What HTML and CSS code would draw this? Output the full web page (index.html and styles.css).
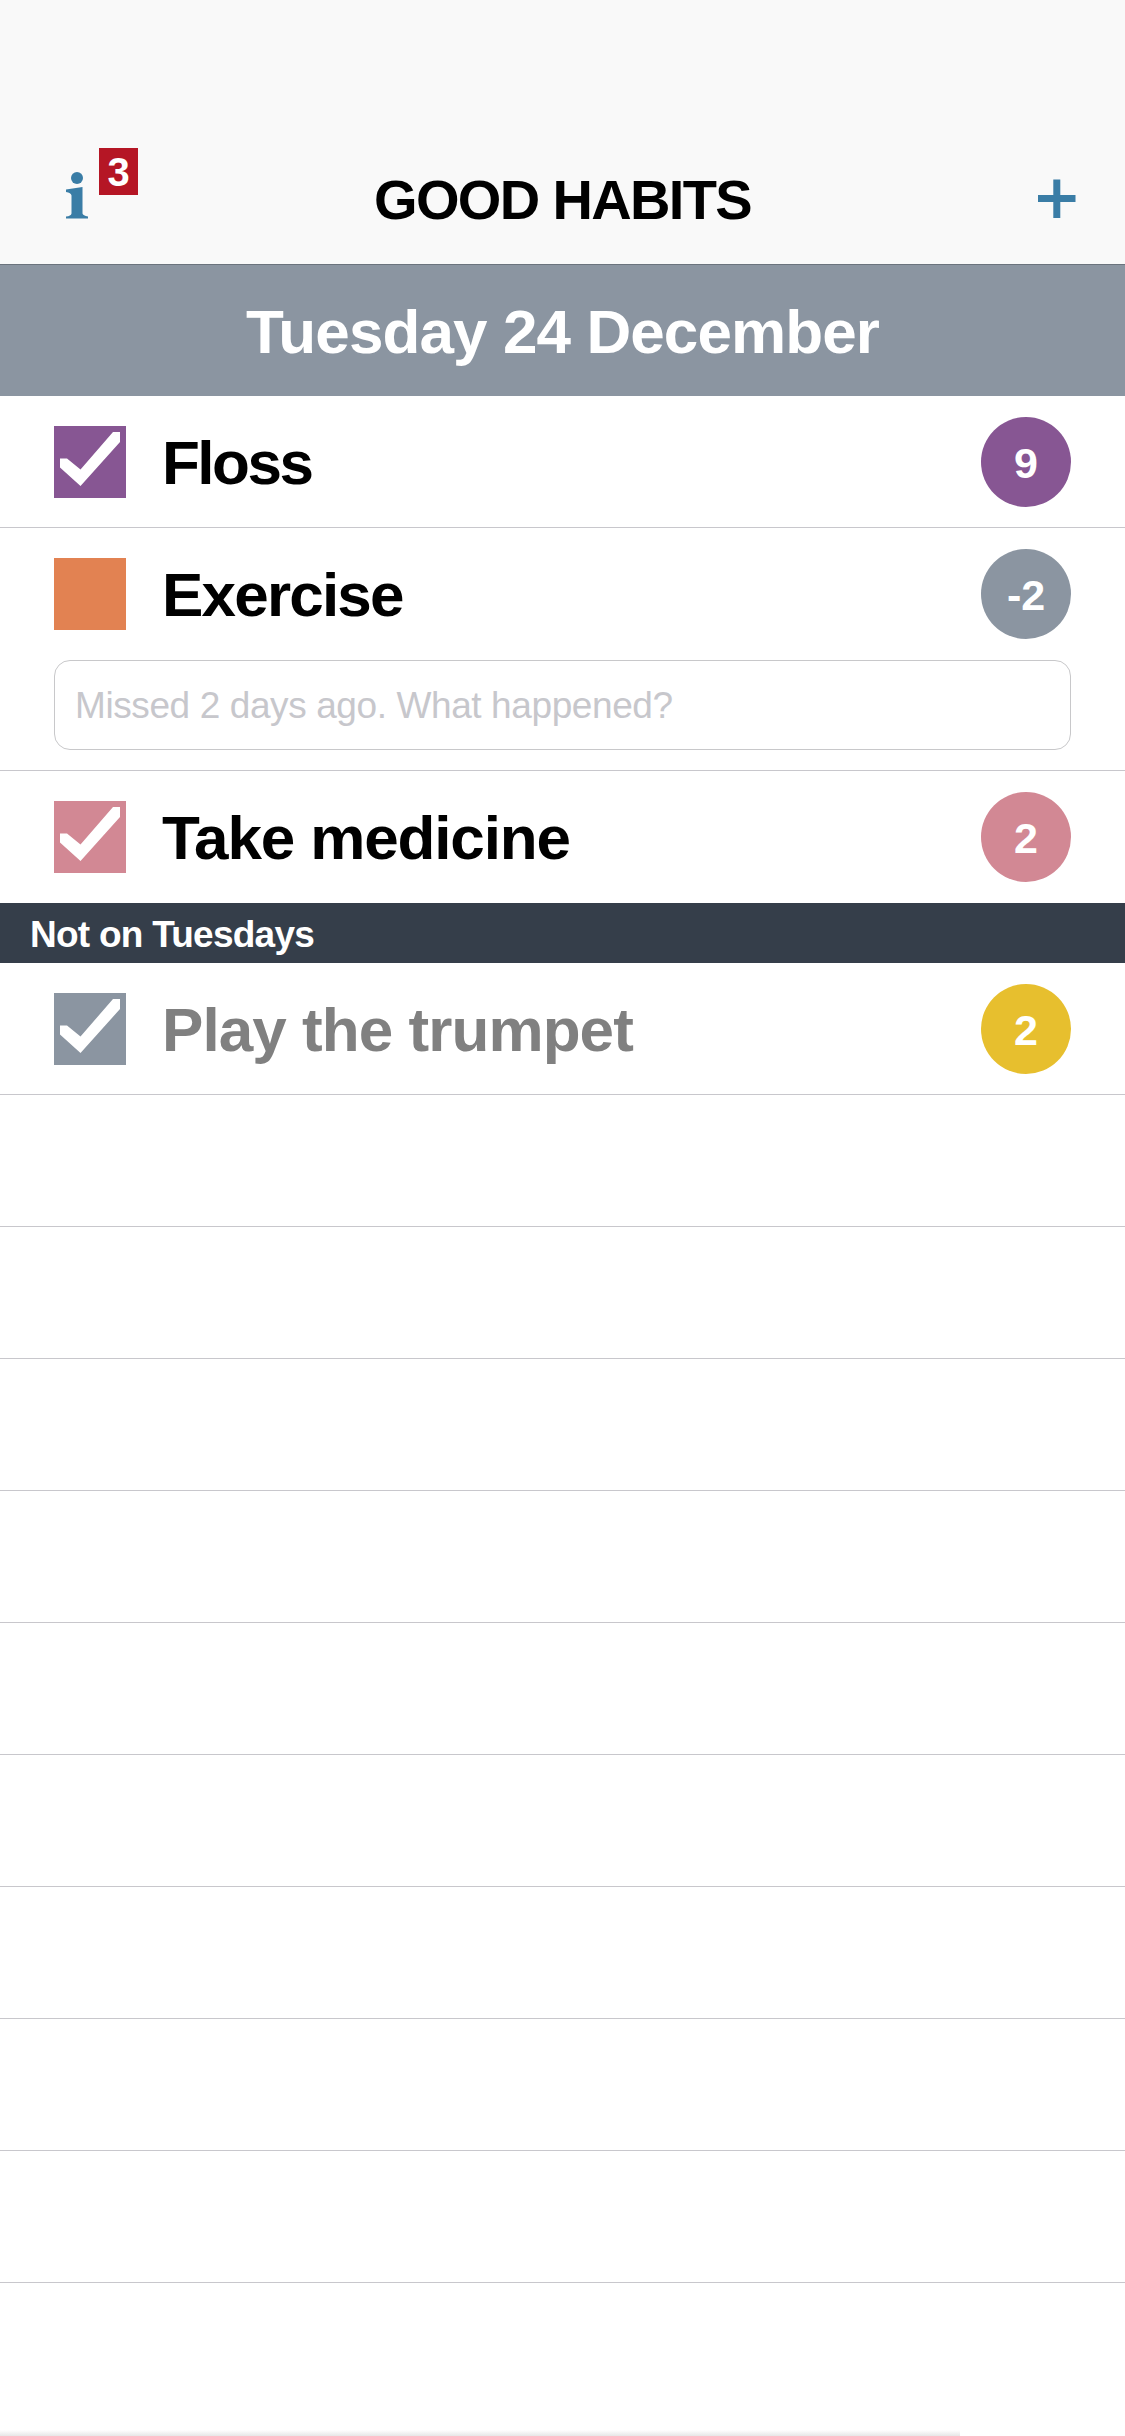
FILE: index.html
```html
<!DOCTYPE html>
<html lang="en">
<head>
<meta charset="utf-8">
<title>Good Habits</title>
<link rel="stylesheet" href="styles.css">
</head>
<body>
<svg class="defs" width="0" height="0" aria-hidden="true">
  <symbol id="tick" viewBox="0 0 72 72"><path fill="#fff" d="M6 32.500H13L26.500 43.500 59 6H66V16L26.500 60 6 41.500Z"/></symbol>
</svg>
<main class="screen">
  <header class="navbar">
    <button class="info" aria-label="Information">
      <svg class="info-icon" width="24" height="48" viewBox="0 0 24 48"><circle cx="11" cy="6" r="6"/><path d="M0 17.500 16.500 15V41.500Q17 43.500 22 44.500V46.500H0V44.500Q5 44 5.500 41.500V23.500Q5 20.500 0 20Z"/></svg>
      <span class="alert">3</span>
    </button>
    <h1 class="title">GOOD HABITS</h1>
    <button class="add" aria-label="Add habit">
      <svg width="38" height="40" viewBox="0 0 38 40"><path d="M15.300.500H22.300V16H37.500V23H22.300V39H15.300V23H0V16H15.300Z"/></svg>
    </button>
  </header>
  <h2 class="date"><span>Tuesday 24 December</span></h2>
  <section>
    <article class="habit">
      <div class="line"><span class="box purple"><svg class="tick"><use href="#tick"/></svg></span><span class="name floss">Floss</span><span class="count purple">9</span></div>
    </article>
    <article class="habit">
      <div class="line"><span class="box orange"></span><span class="name exercise">Exercise</span><span class="count grey">-2</span></div>
      <div class="reason">Missed 2 days ago. What happened?</div>
    </article>
    <article class="habit last">
      <div class="line"><span class="box pink"><svg class="tick"><use href="#tick"/></svg></span><span class="name medicine">Take medicine</span><span class="count pink">2</span></div>
    </article>
  </section>
  <h3 class="group"><span>Not on Tuesdays</span></h3>
  <section>
    <article class="habit">
      <div class="line"><span class="box grey"><svg class="tick"><use href="#tick"/></svg></span><span class="name trumpet">Play the trumpet</span><span class="count yellow">2</span></div>
    </article>
    <div class="habit empty"></div>
    <div class="habit empty"></div>
    <div class="habit empty"></div>
    <div class="habit empty"></div>
    <div class="habit empty"></div>
    <div class="habit empty"></div>
    <div class="habit empty"></div>
    <div class="habit empty"></div>
    <div class="habit empty"></div>
  </section>
  <div class="bottom-shade"></div>
</main>
</body>
</html>
```
FILE: styles.css
```css
* { box-sizing: border-box; }
body {
  margin: 0;
  background: #fff;
  font-family: "Liberation Sans", Arial, sans-serif;
}
.defs { display: block; height: 0; }
.screen {
  display: flex;
  flex-direction: column;
  width: 1125px;
  height: 2436px;
  overflow: hidden;
}
.navbar {
  display: grid;
  grid-template-columns: 200px 1fr 200px;
  height: 264px;
  padding-top: 132px;
  background: #f9f9f9;
}
button {
  display: flex;
  align-items: flex-start;
  margin: 0;
  padding: 0;
  border: 0;
  background: none;
  font-family: inherit;
  fill: #3a7da6;
}
.info { padding: 16px 0 0 66px; }
.info-icon { margin-top: 24px; }
.alert {
  width: 39px;
  height: 47px;
  margin-left: 9px;
  background: #b51625;
  color: #fff;
  font-size: 40px;
  font-weight: bold;
  line-height: 48px;
  text-align: center;
}
.add { justify-content: flex-end; padding: 47px 49px 0 0; }
.title {
  margin: 0;
  font-size: 56px;
  line-height: 135px;
  text-align: center;
  white-space: nowrap;
  letter-spacing: -1.65px;
}
.date {
  height: 132px;
  margin: 0;
  border-top: 1px solid #6b737d;
  background: #8b95a1;
  color: #fff;
  font-size: 62px;
  line-height: 133px;
  text-align: center;
  letter-spacing: -0.9px;
}
.habit { border-bottom: 1px solid #c8c7cc; }
.last { border-bottom: 0; padding-bottom: 1px; }
.empty { height: 132px; }
.line {
  display: flex;
  align-items: flex-start;
  height: 131px;
  padding: 21px 54px 0;
}
.box { width: 72px; height: 72px; margin-top: 9px; }
.tick { display: block; width: 72px; height: 72px; }
.name {
  flex: 1;
  margin-left: 36px;
  font-size: 62px;
  font-weight: bold;
  line-height: 92px;
  white-space: nowrap;
}
.floss { letter-spacing: -2.5px; }
.exercise { letter-spacing: -1.8px; }
.medicine { letter-spacing: -1.15px; }
.trumpet { color: #808080; letter-spacing: -0.93px; }
.count {
  width: 90px;
  height: 90px;
  border-radius: 50%;
  color: #fff;
  font-size: 43px;
  font-weight: bold;
  line-height: 92px;
  text-align: center;
}
.purple { background: #875693; }
.orange { background: #e28252; }
.pink { background: #d28894; }
.grey { background: #8b95a1; }
.yellow { background: #e7bf2e; }
.reason {
  height: 90px;
  margin: 1px 54px 20px;
  padding-left: 20px;
  border: 1px solid #c8c8ca;
  border-radius: 16px;
  color: #c7c7cc;
  font-size: 37px;
  line-height: 89px;
  letter-spacing: -0.4px;
}
.group {
  height: 60px;
  margin: 0;
  padding-left: 30px;
  background: #353e4a;
  color: #fff;
  font-size: 37px;
  line-height: 63px;
  letter-spacing: -0.75px;
}
.bottom-shade {
  width: 960px;
  height: 6px;
  margin-top: auto;
  background: linear-gradient(#fff, #e6e6e6);
}
```
